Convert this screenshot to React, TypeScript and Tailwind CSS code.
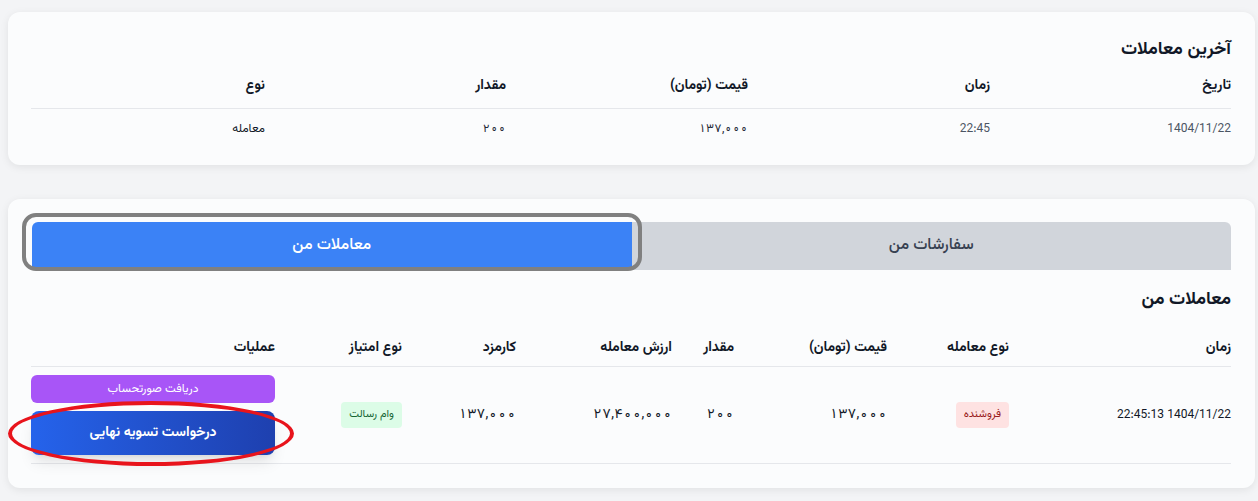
import React from 'react';

const font = { fontFamily: "Vazirmatn, Roboto, 'DejaVu Sans', sans-serif" };

const lastTrades = [
  { date: '1404/11/22', time: '22:45', price: '۱۳۷,۰۰۰', amount: '۲۰۰', kind: 'معامله' },
];

function LastTradesCard() {
  const cols = [241, 242, 242, 241, 234];
  return (
    <div className="rounded-xl bg-[#fbfcfd] shadow-[0_2px_8px_rgba(0,0,0,0.08)] px-6 pt-6 pb-4">
      <h2 className="text-lg font-bold text-[#111827] leading-7 mb-3">آخرین معاملات</h2>
      <table className="w-full table-fixed text-right">
        <colgroup>
          {cols.map((w, i) => (
            <col key={i} style={{ width: w }} />
          ))}
        </colgroup>
        <thead>
          <tr className="border-b border-[#e5e7eb]">
            {['تاریخ', 'زمان', 'قیمت (تومان)', 'مقدار', 'نوع'].map((h) => (
              <th key={h} className="pb-3 text-sm font-bold text-[#111827]">{h}</th>
            ))}
          </tr>
        </thead>
        <tbody>
          {lastTrades.map((t, i) => (
            <tr key={i} className="text-xs">
              <td className="py-3 text-[#4b5563]">{t.date}</td>
              <td className="py-3 text-[#4b5563]">{t.time}</td>
              <td className="py-3 text-[#1f2937] tabular-nums">{t.price}</td>
              <td className="py-3 text-[#1f2937] tabular-nums">{t.amount}</td>
              <td className="py-3 text-[#111827]">{t.kind}</td>
            </tr>
          ))}
        </tbody>
      </table>
    </div>
  );
}

function MyTradesCard() {
  const cols = [222, 122, 153, 62, 156, 114, 127, 244];
  const heads = ['زمان', 'نوع معامله', 'قیمت (تومان)', 'مقدار', 'ارزش معامله', 'کارمزد', 'نوع امتیاز', 'عملیات'];
  return (
    <div className="relative rounded-xl bg-[#fbfcfd] shadow-[0_2px_8px_rgba(0,0,0,0.08)] px-6 pt-[23px] pb-6">
      <div className="flex h-12 rounded-t-md overflow-hidden text-base">
        <button className="flex-1 bg-[#d1d5db] text-[#374151] font-medium">سفارشات من</button>
        <button className="flex-1 bg-[#3b82f6] text-white font-medium">معاملات من</button>
      </div>
      <h2 className="mt-4 mb-4 text-lg font-bold text-[#111827] leading-7">معاملات من</h2>
      <table className="w-full table-fixed text-right">
        <colgroup>
          {cols.map((w, i) => (
            <col key={i} style={{ width: w }} />
          ))}
        </colgroup>
        <thead>
          <tr className="border-b border-[#e5e7eb]">
            {heads.map((h) => (
              <th key={h} className="py-2 text-sm font-bold text-[#111827]">{h}</th>
            ))}
          </tr>
        </thead>
        <tbody>
          <tr className="border-b border-[#e5e7eb] text-sm text-[#111827]">
            <td className="py-2 text-xs">1404/11/22 22:45:13</td>
            <td className="py-2">
              <span className="inline-block rounded bg-[#fee2e2] text-[#991b1b] text-[11px] leading-4 px-2 py-[5px]">فروشنده</span>
            </td>
            <td className="py-2 tabular-nums">۱۳۷,۰۰۰</td>
            <td className="py-2 tabular-nums">۲۰۰</td>
            <td className="py-2 tabular-nums">۲۷,۴۰۰,۰۰۰</td>
            <td className="py-2 tabular-nums">۱۳۷,۰۰۰</td>
            <td className="py-2">
              <span className="inline-block rounded bg-[#dcfce7] text-[#166534] text-[11px] leading-4 px-2 py-[5px]">وام رسالت</span>
            </td>
            <td className="py-2">
              <div className="flex flex-col gap-2">
                <button className="h-7 w-full rounded-md bg-[#a855f7] text-white text-xs">دریافت صورتحساب</button>
                <button className="h-11 w-full rounded-lg bg-gradient-to-l from-[#1e40af] to-[#2563eb] text-white text-sm font-bold shadow-lg">
                  درخواست تسویه نهایی
                </button>
              </div>
            </td>
          </tr>
        </tbody>
      </table>
      {/* annotation overlays */}
      <div className="pointer-events-none absolute left-[14px] top-[14px] w-[620px] h-[58px] rounded-[14px] border-4 border-[#808080]" />
      <div className="pointer-events-none absolute left-0 top-[202px] w-[286px] h-[65px] rounded-[50%] border-4 border-[#e8141c]" />
    </div>
  );
}

export default function App() {
  return (
    <div dir="rtl" style={font} className="min-h-screen bg-[#f3f4f6] pt-3 pl-2 pr-[3px] pb-3">
      <LastTradesCard />
      <div className="mt-[34px]">
        <MyTradesCard />
      </div>
    </div>
  );
}
